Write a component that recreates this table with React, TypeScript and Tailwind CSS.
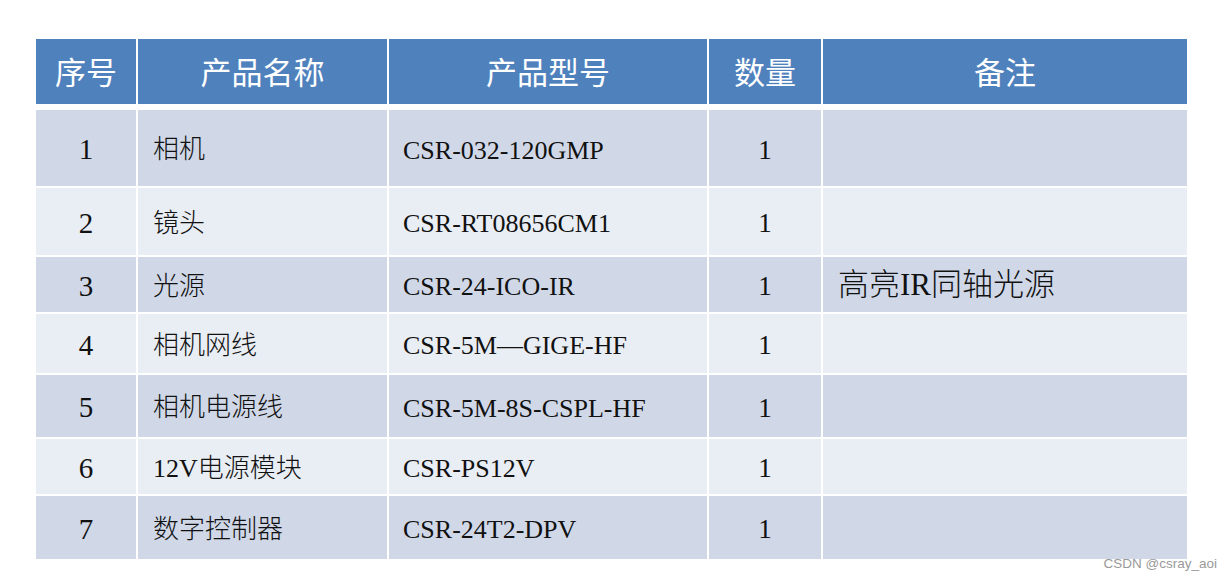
import React from "react"

const rows = [
  { no: "1", name: "相机", model: "CSR-032-120GMP", qty: "1", note: "", h: "h-[76px]" },
  { no: "2", name: "镜头", model: "CSR-RT08656CM1", qty: "1", note: "", h: "h-[67px]" },
  { no: "3", name: "光源", model: "CSR-24-ICO-IR", qty: "1", note: "高亮IR同轴光源", h: "h-[55px]" },
  { no: "4", name: "相机网线", model: "CSR-5M—GIGE-HF", qty: "1", note: "", h: "h-[59px]" },
  { no: "5", name: "相机电源线", model: "CSR-5M-8S-CSPL-HF", qty: "1", note: "", h: "h-[62px]" },
  { no: "6", name: "12V电源模块", model: "CSR-PS12V", qty: "1", note: "", h: "h-[55px]" },
  { no: "7", name: "数字控制器", model: "CSR-24T2-DPV", qty: "1", note: "", h: "h-[63px]" },
]

const headers = ["序号", "产品名称", "产品型号", "数量", "备注"]

const cols = "grid grid-cols-[100px_249px_318px_112px_364px] gap-x-[2px]"
const body = "font-['Liberation_Serif','Noto_Sans_CJK_SC',serif] text-[#111]"

export default function App() {
  return (
    <div className="relative w-[1231px] h-[583px] bg-white">
      <div className="pl-[36px] pt-[39px]">
        {/* header */}
        <div className={`${cols} h-[65px]`}>
          {headers.map((h) => (
            <div
              key={h}
              className="flex items-center justify-center bg-[#4f81bd] text-white text-[31px] font-normal font-['Noto_Sans_CJK_SC',sans-serif]"
            >
              {h}
            </div>
          ))}
        </div>

        {/* body */}
        <div className="mt-[6px] flex flex-col gap-y-[2px]">
          {rows.map((r, i) => {
            const bg = i % 2 === 0 ? "bg-[#d0d8e8]" : "bg-[#e9edf4]"
            return (
              <div key={r.no} className={`${cols} ${r.h} ${body}`}>
                <div className={`${bg} flex items-center justify-center pt-[4px] text-[29px]`}>{r.no}</div>
                <div className={`${bg} flex items-center pl-[15px] pt-[3px] text-[26px] font-light`}>{r.name}</div>
                <div className={`${bg} flex items-center pl-[14px] pt-[4px] text-[26px]`}>{r.model}</div>
                <div className={`${bg} flex items-center justify-center pt-[4px] text-[27px]`}>{r.qty}</div>
                <div className={`${bg} flex items-center pl-[15px] pt-[2px] text-[31px] font-light`}>{r.note}</div>
              </div>
            )
          })}
        </div>
      </div>

      {/* watermark */}
      <div className="absolute right-[14px] bottom-[9px] text-[13.5px] text-[#999] font-['Liberation_Sans',sans-serif]">
        CSDN @csray_aoi
      </div>
    </div>
  )
}
